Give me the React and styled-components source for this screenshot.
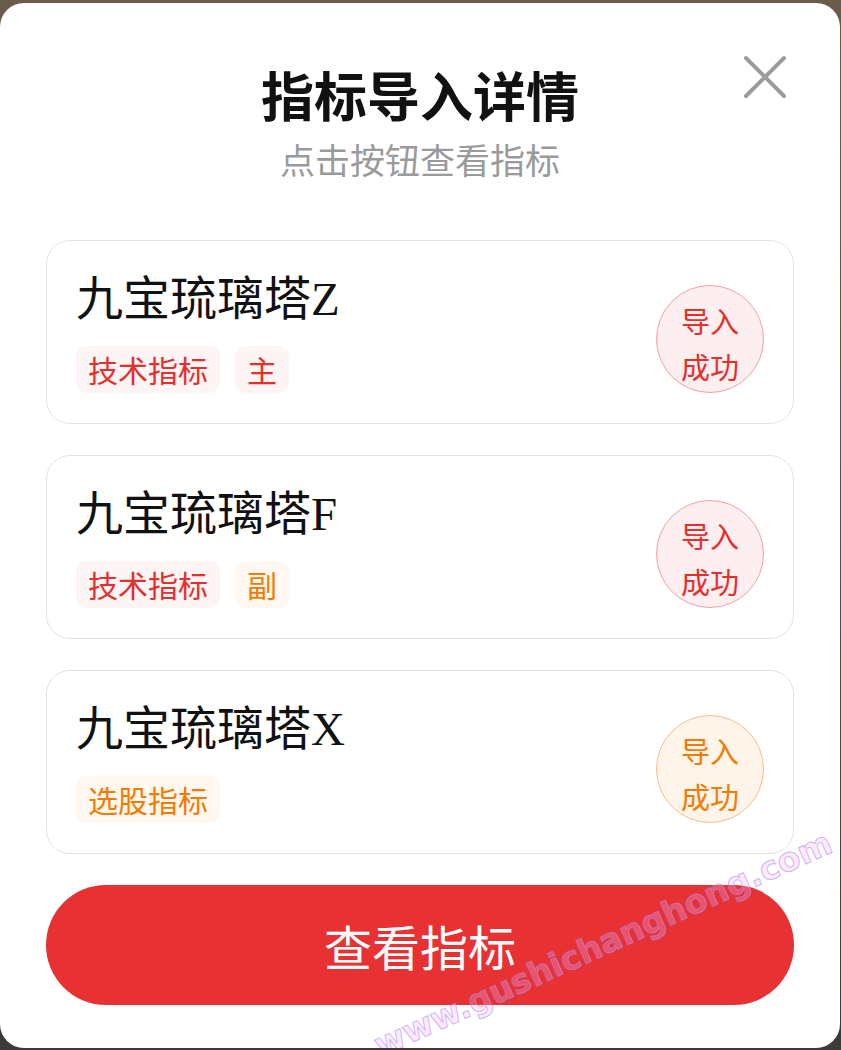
import React from "react";
import styled, { createGlobalStyle, css } from "styled-components";

const GlobalStyle = createGlobalStyle`
  html, body {
    margin: 0;
    padding: 0;
  }
  body {
    background: linear-gradient(180deg, #6a5b4b 0%, #55504a 50%, #3c3a38 100%);
    font-family: "Noto Sans CJK SC", "Noto Sans", sans-serif;
  }
`;

const Page = styled.div`
  box-sizing: border-box;
  width: 841px;
  height: 1050px;
  padding-top: 3px;
  overflow: hidden;
`;

const Modal = styled.div`
  position: relative;
  box-sizing: border-box;
  width: 840px;
  height: 1045px;
  padding: 60px 46px 0;
  background: #ffffff;
  border-radius: 24px;
  overflow: hidden;
  display: flex;
  flex-direction: column;
`;

const Header = styled.header`
  display: flex;
  flex-direction: column;
  align-items: center;
`;

const Title = styled.h1`
  margin: 0;
  font-size: 53px;
  line-height: 62px;
  font-weight: 700;
  color: #111111;
`;

const Subtitle = styled.p`
  margin: 12px 0 0;
  font-size: 35px;
  line-height: 44px;
  color: #9a9a9a;
`;

const CloseButton = styled.button`
  position: absolute;
  top: 52px;
  right: 53px;
  width: 44px;
  height: 44px;
  padding: 0;
  border: none;
  background: transparent;
  display: flex;
`;

const List = styled.div`
  margin-top: 59px;
  display: flex;
  flex-direction: column;
  gap: 31px;
`;

const Card = styled.div`
  box-sizing: border-box;
  height: 184px;
  border: 1px solid #e3e3e3;
  border-radius: 24px;
  padding: 30px 29px 30px 29px;
  display: flex;
  justify-content: space-between;
  align-items: flex-end;
`;

const Info = styled.div`
  display: flex;
  flex-direction: column;
  gap: 19px;
`;

const Name = styled.div`
  font-family: "Liberation Serif", "Noto Sans CJK SC", serif;
  font-size: 47px;
  line-height: 56px;
  color: #111111;
  white-space: nowrap;
`;

const Tags = styled.div`
  display: flex;
  gap: 15px;
`;

const tones = {
  red: { text: "#e62e2c", bg: "#fdf4f4", stampBg: "#fdeeef", border: "#f2a0a3" },
  orange: { text: "#f57a00", bg: "#fff7f0", stampBg: "#fff4ea", border: "#f9bd85" },
};

const Tag = styled.span`
  box-sizing: border-box;
  height: 47px;
  padding: 0 12px;
  border-radius: 10px;
  font-size: 30px;
  line-height: 47px;
  ${({ $tone }) => css`
    color: ${tones[$tone].text};
    background: ${tones[$tone].bg};
  `}
`;

const Stamp = styled.div`
  box-sizing: border-box;
  width: 108px;
  height: 108px;
  flex: none;
  border-radius: 50%;
  padding-top: 7px;
  display: flex;
  flex-direction: column;
  align-items: center;
  justify-content: center;
  font-size: 29px;
  line-height: 46px;
  ${({ $tone }) => css`
    color: ${tones[$tone].text};
    background: ${tones[$tone].stampBg};
    border: 1px solid ${tones[$tone].border};
  `}
`;

const PrimaryButton = styled.button`
  margin-top: 31px;
  height: 120px;
  width: 100%;
  border: none;
  border-radius: 60px;
  background: #e83133;
  color: #ffffff;
  font-family: "Noto Sans CJK SC", sans-serif;
  font-size: 48px;
  line-height: 120px;
  padding: 0;
`;

const Watermark = styled.div`
  position: absolute;
  left: 603px;
  top: 941px;
  transform: translate(-50%, -50%) rotate(-24.4deg);
  font-family: "DejaVu Sans", sans-serif;
  font-weight: 700;
  font-size: 33px;
  line-height: 40px;
  white-space: nowrap;
  color: rgba(255, 175, 230, 0.28);
  -webkit-text-stroke: 1px rgba(160, 140, 255, 0.6);
  pointer-events: none;
`;

const items = [
  { name: "九宝琉璃塔Z", tags: [["技术指标", "red"], ["主", "red"]], tone: "red" },
  { name: "九宝琉璃塔F", tags: [["技术指标", "red"], ["副", "orange"]], tone: "red" },
  { name: "九宝琉璃塔X", tags: [["选股指标", "orange"]], tone: "orange" },
];

export default function App() {
  return (
    <>
      <GlobalStyle />
      <Page>
        <Modal>
          <CloseButton aria-label="关闭">
            <svg width="44" height="44" viewBox="0 0 44 44">
              <path
                d="M3 3 L41 41 M41 3 L3 41"
                stroke="#9b9b9b"
                strokeWidth="4"
                strokeLinecap="round"
                fill="none"
              />
            </svg>
          </CloseButton>
          <Header>
            <Title>指标导入详情</Title>
            <Subtitle>点击按钮查看指标</Subtitle>
          </Header>
          <List>
            {items.map((item) => (
              <Card key={item.name}>
                <Info>
                  <Name>{item.name}</Name>
                  <Tags>
                    {item.tags.map(([label, tone]) => (
                      <Tag key={label} $tone={tone}>
                        {label}
                      </Tag>
                    ))}
                  </Tags>
                </Info>
                <Stamp $tone={item.tone}>
                  <span>导入</span>
                  <span>成功</span>
                </Stamp>
              </Card>
            ))}
          </List>
          <PrimaryButton>查看指标</PrimaryButton>
          <Watermark>www.gushichanghong.com</Watermark>
        </Modal>
      </Page>
    </>
  );
}
